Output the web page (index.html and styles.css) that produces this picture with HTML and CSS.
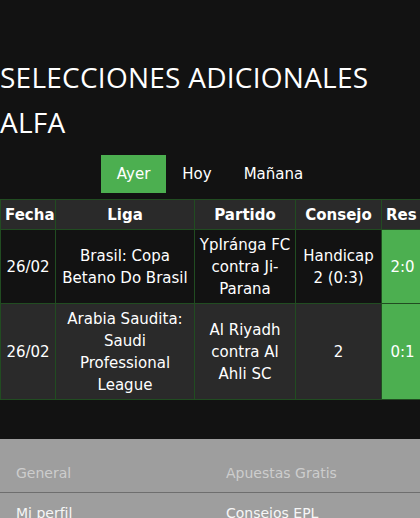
FILE: index.html
```html
<!DOCTYPE html>
<html lang="es">
<head>
<meta charset="utf-8">
<title>Selecciones adicionales Alfa</title>
<link rel="stylesheet" href="styles.css">
</head>
<body>
<main class="page">
  <h1 class="title">SELECCIONES ADICIONALES ALFA</h1>
  <nav class="tabs">
    <a class="tab active">Ayer</a>
    <a class="tab">Hoy</a>
    <a class="tab">Mañana</a>
  </nav>
  <div class="table-wrap">
    <table class="tips">
      <colgroup>
        <col class="c-date"><col class="c-league"><col class="c-match"><col class="c-tip"><col class="c-res">
      </colgroup>
      <thead>
        <tr><th>Fecha</th><th>Liga</th><th>Partido</th><th>Consejo</th><th class="res-h">Res</th></tr>
      </thead>
      <tbody>
        <tr class="row-dark">
          <td>26/02</td>
          <td>Brasil: Copa Betano Do Brasil</td>
          <td>YpIránga FC contra Ji-Parana</td>
          <td>Handicap 2 (0:3)</td>
          <td class="res">2:0</td>
        </tr>
        <tr class="row-light">
          <td>26/02</td>
          <td>Arabia Saudita: Saudi Professional League</td>
          <td>Al Riyadh contra Al Ahli SC</td>
          <td>2</td>
          <td class="res">0:1</td>
        </tr>
      </tbody>
    </table>
  </div>
</main>
<footer class="footer">
  <div class="fcol">
    <div class="fcol-title">General</div>
    <a class="flink">Mi perfil</a>
  </div>
  <div class="fcol">
    <div class="fcol-title">Apuestas Gratis</div>
    <a class="flink">Consejos EPL</a>
  </div>
</footer>
</body>
</html>
```

FILE: styles.css
```css
html, body {
  margin: 0;
  padding: 0;
  background: #121212;
  color: #ffffff;
  font-family: "DejaVu Sans", Verdana, sans-serif;
  overflow-x: hidden;
}

.page {
  padding-top: 55px;
}

.title {
  margin: 0;
  font-family: "Open Sans", "Noto Sans", sans-serif;
  font-weight: 400;
  font-size: 28px;
  line-height: 45px;
  letter-spacing: 0.25px;
  color: #ffffff;
}

.tabs {
  display: flex;
  justify-content: center;
  margin-top: 10px;
}

.tab {
  display: block;
  padding: 8px 16px;
  font-size: 15px;
  line-height: 22px;
  color: #ffffff;
}

.tab.active {
  background: #4caf50;
}

.table-wrap {
  margin-top: 6px;
  width: 420px;
  overflow: hidden;
}

.tips {
  border-collapse: collapse;
  table-layout: fixed;
  width: 423px;
  font-size: 15px;
  line-height: 22px;
}

.c-date { width: 55px; }
.c-league { width: 139px; }
.c-match { width: 101px; }
.c-tip { width: 86px; }
.c-res { width: 42px; }

.tips th,
.tips td {
  border: 1px solid #214c21;
  padding: 3.5px 4px;
  text-align: center;
  vertical-align: middle;
}

.tips th {
  background: #2a2a2a;
  font-weight: 700;
}

.tips th.res-h {
  text-align: left;
}

.row-dark td {
  background: #121212;
}

.row-light td {
  background: #2a2a2a;
}

.tips td.res {
  background: #4caf50;
}

.footer {
  margin-top: 39px;
  background: #9e9e9e;
  display: grid;
  grid-template-columns: 210px 210px;
  padding-top: 24px;
  font-size: 14px;
  line-height: 20px;
}

.fcol-title {
  color: #cdcdcd;
  padding: 0 0 9px 16px;
  border-bottom: 1px solid #6e6e6e;
}

.flink {
  display: block;
  padding: 10px 0 0 16px;
  color: #f6f6f6;
}
```
